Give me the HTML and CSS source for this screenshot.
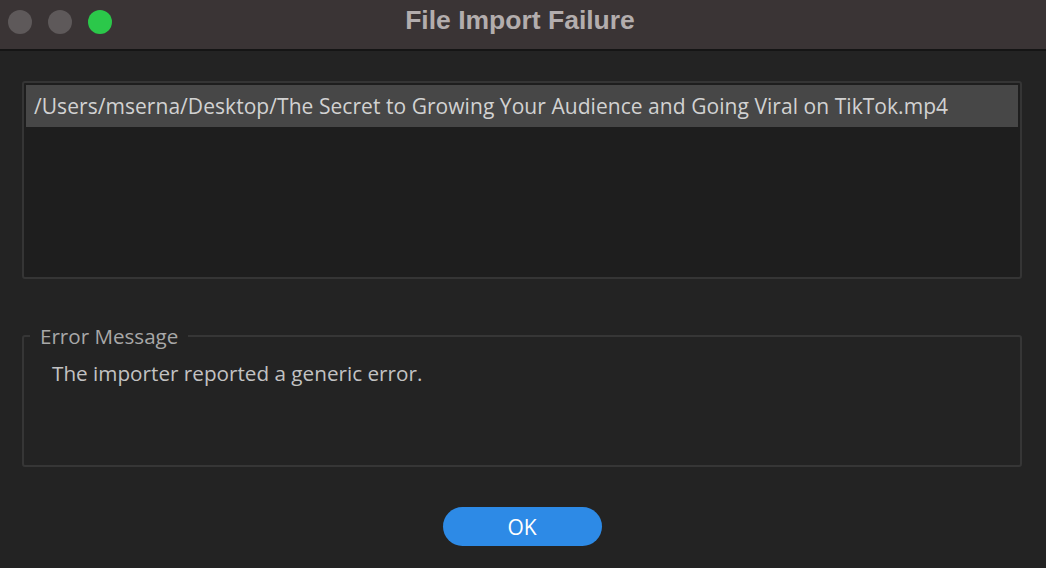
FILE: index.html
```html
<!DOCTYPE html>
<html>
<head>
<meta charset="utf-8">
<link rel="stylesheet" href="styles.css">
</head>
<body>
<div class="window">
  <div class="titlebar">
    <div class="lights">
      <span class="light gray"></span>
      <span class="light gray"></span>
      <span class="light green"></span>
    </div>
    <div class="title">File Import Failure</div>
  </div>
  <div class="content">
    <div class="listbox">
      <div class="row selected">/Users/mserna/Desktop/The Secret to Growing Your Audience and Going Viral on TikTok.mp4</div>
    </div>
    <fieldset class="group">
      <legend>Error Message</legend>
      <div class="message">The importer reported a generic error.</div>
    </fieldset>
    <div class="actions">
      <button class="ok">OK</button>
    </div>
  </div>
</div>
</body>
</html>
```

FILE: styles.css
```css
html, body {
  margin: 0;
  padding: 0;
  background: #232323;
  width: 1046px;
  height: 568px;
  overflow: hidden;
  font-family: "Open Sans", "Liberation Sans", sans-serif;
}
.window {
  display: flex;
  flex-direction: column;
  height: 568px;
}
.titlebar {
  background: #3a3435;
  border-bottom: 2px solid #151515;
  display: flex;
  align-items: center;
  position: relative;
  box-sizing: border-box;
  height: 51px;
}
.lights {
  display: flex;
  gap: 16px;
  padding-left: 8px;
  padding-bottom: 6px;
}
.light {
  width: 24px;
  height: 24px;
  border-radius: 50%;
  display: block;
}
.light.gray { background: #5e595a; }
.light.green { background: #2bc84a; }
.title {
  position: absolute;
  left: 0;
  right: 0;
  top: 4px;
  text-align: center;
  color: #b3adad;
  font-family: "Liberation Sans", Arial, sans-serif;
  font-weight: bold;
  font-size: 26.5px;
  line-height: 32px;
  padding-right: 6px;
}
.content {
  padding: 30px 24px 0 22px;
  display: flex;
  flex-direction: column;
}
.listbox {
  height: 198px;
  box-sizing: border-box;
  border: 2px solid #353535;
  border-radius: 3px;
  background: #1e1e1e;
  padding: 2px 2px;
}
.row {
  height: 42px;
  line-height: 42px;
  padding-left: 8px;
  font-size: 21px;
  letter-spacing: 0.05px;
  color: #d2d2d2;
  white-space: nowrap;
}
.row.selected { background: #474747; }
.group {
  margin: 44px 0 0 0;
  padding: 0 0 0 28px;
  border: 2px solid #363636;
  border-radius: 3px;
  height: 144px;
  box-sizing: border-box;
}
.group legend {
  margin-left: -22px;
  padding: 0 10px;
  font-size: 20.6px;
  color: #a8a8a8;
  line-height: 26px;
}
.message {
  font-size: 20.7px;
  color: #c2c2c2;
  margin-top: 10px;
}
.actions {
  display: flex;
  justify-content: center;
  padding-top: 40px;
}
.ok {
  width: 159px;
  height: 39px;
  border: none;
  border-radius: 20px;
  background: #2d8ae6;
  color: #ffffff;
  font-family: "Open Sans", "Liberation Sans", sans-serif;
  font-size: 21px;
  font-weight: 500;
  padding: 0;
}
```
